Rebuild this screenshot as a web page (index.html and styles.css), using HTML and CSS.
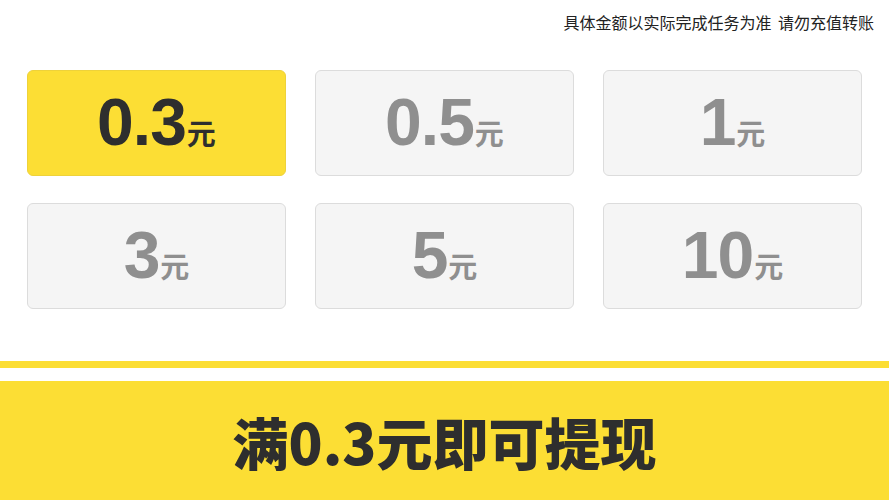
FILE: index.html
```html
<!DOCTYPE html>
<html lang="zh-CN">
<head>
  <meta charset="UTF-8">
  <title>提现</title>
  <link rel="stylesheet" href="styles.css">
</head>
<body>
  <div class="tip">具体金额以实际完成任务为准 请勿充值转账</div>

  <div class="grid">
    <div class="opt active"><span class="num">0.3</span><span class="unit">元</span></div>
    <div class="opt"><span class="num">0.5</span><span class="unit">元</span></div>
    <div class="opt"><span class="num">1</span><span class="unit">元</span></div>
    <div class="opt"><span class="num">3</span><span class="unit">元</span></div>
    <div class="opt"><span class="num">5</span><span class="unit">元</span></div>
    <div class="opt"><span class="num">10</span><span class="unit">元</span></div>
  </div>

  <div class="stripe"></div>
  <div class="banner">满0.3元即可提现</div>
</body>
</html>
```

FILE: styles.css
```css
body {
  margin: 0;
  width: 889px;
  height: 500px;
  overflow: hidden;
  background: #fff;
  font-family: "Liberation Sans", "Noto Sans CJK SC", sans-serif;
  color: #333;
}

.tip {
  height: 48px;
  padding-right: 15px;
  text-align: right;
  font-size: 16px;
  line-height: 48px;
  word-spacing: 2px;
  color: #222;
}

.grid {
  display: grid;
  grid-template-columns: repeat(3, 259px);
  grid-auto-rows: 106px;
  column-gap: 29px;
  row-gap: 27px;
  padding: 22px 0 0 27px;
}

.opt {
  display: flex;
  justify-content: center;
  align-items: baseline;
  padding-top: 16px;
  box-sizing: border-box;
  background: #f5f5f5;
  border: 1px solid #dcdcdc;
  border-radius: 6px;
  color: #8f8f8f;
  font-weight: bold;
}

.opt.active {
  background: #fcde34;
  border-color: #eed23a;
  color: #2e2e2e;
}

.num {
  font-size: 66px;
  line-height: 70px;
  letter-spacing: -1px;
}

.unit {
  font-family: "Noto Sans CJK SC", sans-serif;
  font-size: 29px;
  margin-left: 1px;
}

.stripe {
  height: 7px;
  margin-top: 52px;
  background: #fcde34;
}

.banner {
  height: 119px;
  margin-top: 13px;
  background: #fcde34;
  text-align: center;
  font-family: "Noto Sans CJK SC", sans-serif;
  font-weight: 900;
  font-size: 56px;
  line-height: 119px;
  color: #2e2e2e;
}
```
